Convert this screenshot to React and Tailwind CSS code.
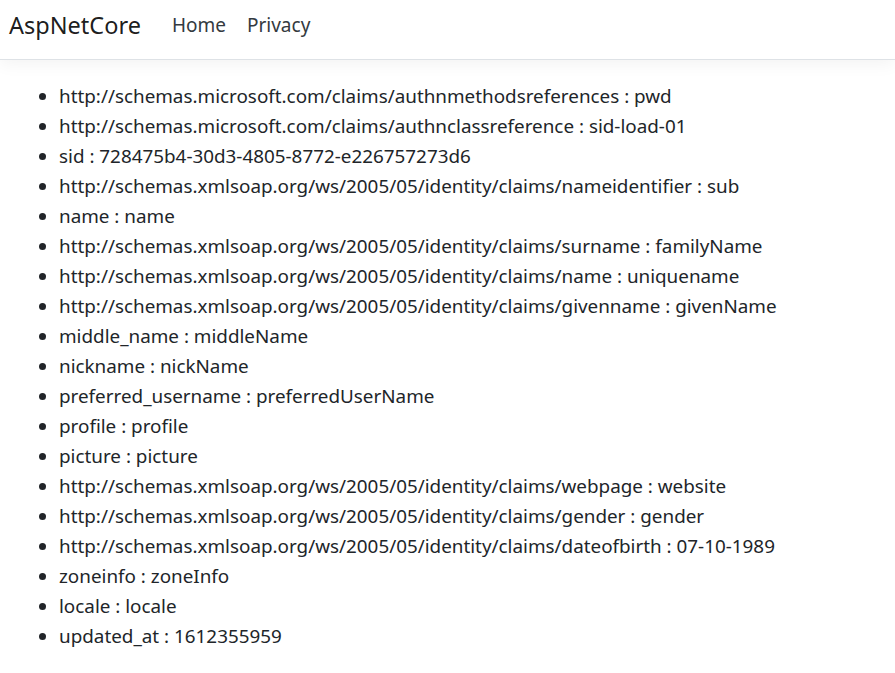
const claims = [
  ['http://schemas.microsoft.com/claims/authnmethodsreferences', 'pwd'],
  ['http://schemas.microsoft.com/claims/authnclassreference', 'sid-load-01'],
  ['sid', '728475b4-30d3-4805-8772-e226757273d6'],
  ['http://schemas.xmlsoap.org/ws/2005/05/identity/claims/nameidentifier', 'sub'],
  ['name', 'name'],
  ['http://schemas.xmlsoap.org/ws/2005/05/identity/claims/surname', 'familyName'],
  ['http://schemas.xmlsoap.org/ws/2005/05/identity/claims/name', 'uniquename'],
  ['http://schemas.xmlsoap.org/ws/2005/05/identity/claims/givenname', 'givenName'],
  ['middle_name', 'middleName'],
  ['nickname', 'nickName'],
  ['preferred_username', 'preferredUserName'],
  ['profile', 'profile'],
  ['picture', 'picture'],
  ['http://schemas.xmlsoap.org/ws/2005/05/identity/claims/webpage', 'website'],
  ['http://schemas.xmlsoap.org/ws/2005/05/identity/claims/gender', 'gender'],
  ['http://schemas.xmlsoap.org/ws/2005/05/identity/claims/dateofbirth', '07-10-1989'],
  ['zoneinfo', 'zoneInfo'],
  ['locale', 'locale'],
  ['updated_at', '1612355959'],
]

export default function App() {
  return (
    <div className="min-h-screen bg-white text-[#212529] font-['Segoe_UI','Noto_Sans',sans-serif]">
      {/* Navbar */}
      <header className="h-[60px] border-b border-[#dee2e6] shadow-[0_4px_16px_rgba(0,0,0,0.05)] mb-[21px]">
        <nav className="h-full flex items-center px-[9px] pb-[8px]">
          <a className="text-[23.5px] text-black/90 mr-[31px]">AspNetCore</a>
          <ul className="flex items-center gap-[21px] text-[19px] text-[#343a40]">
            <li>Home</li>
            <li>Privacy</li>
          </ul>
        </nav>
      </header>

      {/* Claims */}
      <main className="px-[9px]">
        <ul className="list-disc pl-[50px] text-[18.85px] leading-[30px]">
          {claims.map(([type, value]) => (
            <li key={type}>{type} : {value}</li>
          ))}
        </ul>
      </main>
    </div>
  )
}
